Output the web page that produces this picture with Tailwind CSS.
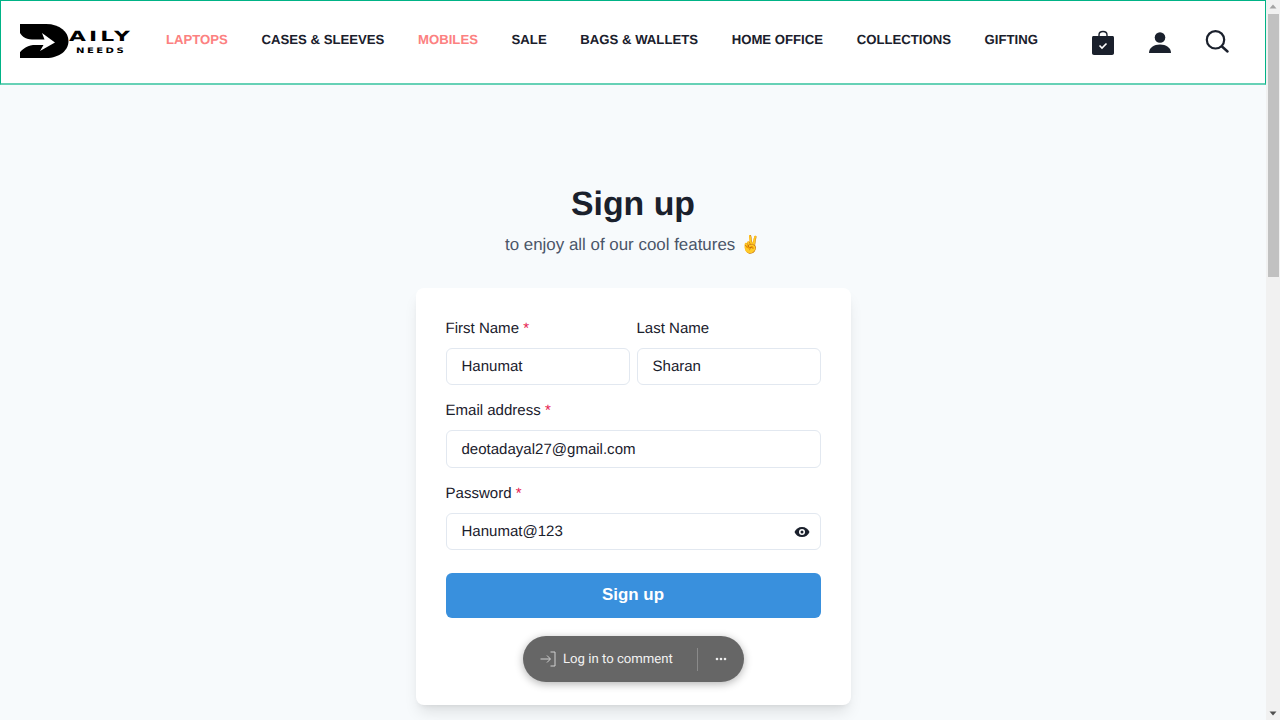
<!DOCTYPE html>
<html lang="en">
<head>
<meta charset="utf-8">
<title>Sign up</title>
<script src="https://cdn.jsdelivr.net/npm/@tailwindcss/browser@4"></script>
</head>
<body class="m-0 overflow-hidden">
<div class="flex h-[720px] w-[1280px] overflow-hidden font-['Liberation_Sans',Arial,sans-serif] text-[#1a202c] [text-rendering:geometricPrecision]">
  <div class="relative flex h-[720px] w-[1266px] flex-col items-center overflow-hidden bg-[#f7fafc]">
    <header class="flex h-[85px] w-full shrink-0 items-start border border-b-2 border-[#00b386] border-b-[#66d1b6] bg-white">
      <div class="mt-[22px] ml-[18px] flex h-[38px] w-[147px] items-start">
        <svg width="54" height="36" viewBox="0 0 54 36" class="shrink-0"><path d="M1 1H27C41 1 49.500 9 49.500 18C49.500 27 41 35 27 35H1V1Z" fill="#000"/><path d="M0 8C2 13 6 16 13 16.500H25.500L23 10L36 19.500L21 28L24.500 22H14C7 23 2 27 0 31Z" fill="#fff"/></svg>
        <div class="-ml-[4px] flex flex-col pt-[9px] font-['DejaVu_Sans',sans-serif] font-bold text-black">
          <span class="inline-block origin-left scale-x-[1.56] text-[14px] leading-[11px] tracking-[2px] whitespace-nowrap">AILY</span>
          <span class="mt-[4px] ml-[7px] inline-block origin-left scale-x-[1.35] text-[7.500px] leading-[7px] tracking-[1.800px] whitespace-nowrap">NEEDS</span>
        </div>
      </div>
      <nav class="mt-[31px] flex items-center gap-[33.650px] text-[13.160px] leading-[16px] font-bold whitespace-nowrap">
        <a class="text-[#fc8181]">LAPTOPS</a>
        <a>CASES &amp; SLEEVES</a>
        <a class="text-[#fc8181]">MOBILES</a>
        <a>SALE</a>
        <a>BAGS &amp; WALLETS</a>
        <a>HOME OFFICE</a>
        <a>COLLECTIONS</a>
        <a>GIFTING</a>
      </nav>
      <div class="mt-[27px] ml-[53.500px] flex items-center gap-[33px]">
        <svg width="24" height="28" viewBox="0 0 24 28"><path d="M8 9V7C8 5 9.500 3.500 12 3.500S16 5 16 7V9" fill="none" stroke="#1a202c" stroke-width="1.400"/><path d="M2.500 8H21.500C22.400 8 23 8.600 23 9.500V25C23 26.200 22.200 27 21 27H3C1.800 27 1 26.200 1 25V9.500C1 8.600 1.600 8 2.500 8Z" fill="#1a202c"/><path d="M8.500 17.500L11 20L15.500 15.500" fill="none" stroke="#fff" stroke-width="1.600"/></svg>
        <svg width="24" height="24" viewBox="0 0 24 24"><circle cx="12" cy="7.500" r="5.300" fill="#1a202c"/><path d="M1 23C1 17.500 6 14.500 12 14.500S23 17.500 23 23Z" fill="#1a202c"/></svg>
        <svg width="24" height="24" viewBox="0 0 24 24"><circle cx="10.500" cy="9.800" r="8.700" fill="none" stroke="#1a202c" stroke-width="2.200"/><path d="M17 16.500L22.500 21.500" stroke="#1a202c" stroke-width="2.400" stroke-linecap="round"/></svg>
      </div>
    </header>
    <h1 class="mt-[98px] text-[33.840px] leading-[42px] font-bold">Sign up</h1>
    <p class="mt-[8px] flex h-[24px] items-center text-[16.920px] leading-[24px] text-[#4a5568]">to enjoy all of our cool features ✌️</p>
    <main class="mt-[31px] flex h-[417px] w-[435px] shrink-0 flex-col rounded-lg bg-white px-[30px] pt-[30px] shadow-lg">
      <div class="flex gap-[7px]">
        <div class="w-[184px]">
          <label class="block text-[15.040px] leading-[21px]">First Name <span class="text-[#e6194f]">*</span></label>
          <div class="mt-[9px] flex h-[37px] items-center rounded-md border border-[#e2e8f0] px-[15px] pt-[2px] text-[15.040px]">Hanumat</div>
        </div>
        <div class="w-[184px]">
          <label class="block text-[15.040px] leading-[21px]">Last Name</label>
          <div class="mt-[9px] flex h-[37px] items-center rounded-md border border-[#e2e8f0] px-[15px] pt-[2px] text-[15.040px]">Sharan</div>
        </div>
      </div>
      <label class="mt-[15px] block text-[15.040px] leading-[21px]">Email address <span class="text-[#e6194f]">*</span></label>
      <div class="mt-[9px] flex h-[38px] items-center rounded-md border border-[#e2e8f0] px-[15px] pt-[2px] text-[15.040px]">deotadayal27@gmail.com</div>
      <label class="mt-[15px] block text-[15.040px] leading-[21px]">Password <span class="text-[#e6194f]">*</span></label>
      <div class="mt-[9px] flex h-[37px] items-center justify-between rounded-md border border-[#e2e8f0] pr-[10px] pl-[15px] text-[15.040px]">
        <span class="pt-[2px]">Hanumat@123</span>
        <svg width="16" height="12" viewBox="0 0 16 12"><path d="M8 1C4.500 1 1.700 3 0.500 6C1.700 9 4.500 11 8 11S14.300 9 15.500 6C14.300 3 11.500 1 8 1Z" fill="#1a202c"/><circle cx="8" cy="6" r="3" fill="#fff"/><circle cx="8" cy="6" r="1.500" fill="#1a202c"/></svg>
      </div>
      <button class="mt-[23px] h-[45px] w-full rounded-md bg-[#3990dd] pb-[2px] text-[16.920px] font-bold text-white">Sign up</button>
    </main>
    <div class="absolute top-[636px] left-[523px] flex h-[46px] w-[221px] items-center rounded-full bg-[#666666] pl-[17px] font-['Roboto',sans-serif] text-[13.160px] text-[#f2f2f2] shadow-[0_2px_8px_rgba(0,0,0,0.3)]">
      <svg width="16" height="16" viewBox="0 0 16 16" class="shrink-0"><path d="M0.500 8H10M7 4.500L10.500 8L7 11.500M10.500 1H15V15H10.500" fill="none" stroke="#d0d0d0" stroke-width="1"/></svg>
      <span class="ml-[7px] pt-[2px]">Log in to comment</span>
      <span class="ml-[24px] h-[23px] w-px bg-[#8a8a8a]"></span>
      <svg width="12" height="4" viewBox="0 0 12 4" class="ml-[17px]"><circle cx="2" cy="2" r="1.300" fill="#eee"/><circle cx="6" cy="2" r="1.300" fill="#eee"/><circle cx="10" cy="2" r="1.300" fill="#eee"/></svg>
    </div>
  </div>
  <div class="flex h-[720px] w-[14px] shrink-0 flex-col items-center bg-[#f1f1f1]">
    <svg width="10" height="14" viewBox="0 0 10 14" class="shrink-0"><path d="M1.500 8.500L5 4.500L8.500 8.500Z" fill="#a3a3a3"/></svg>
    <div class="h-[263px] w-[11px] shrink-0 bg-[#c1c1c1]"></div>
    <div class="flex-1"></div>
    <svg width="10" height="14" viewBox="0 0 10 14" class="shrink-0"><path d="M1.500 5.500L5 9.500L8.500 5.500Z" fill="#505050"/></svg>
  </div>
</div>
</body>
</html>
